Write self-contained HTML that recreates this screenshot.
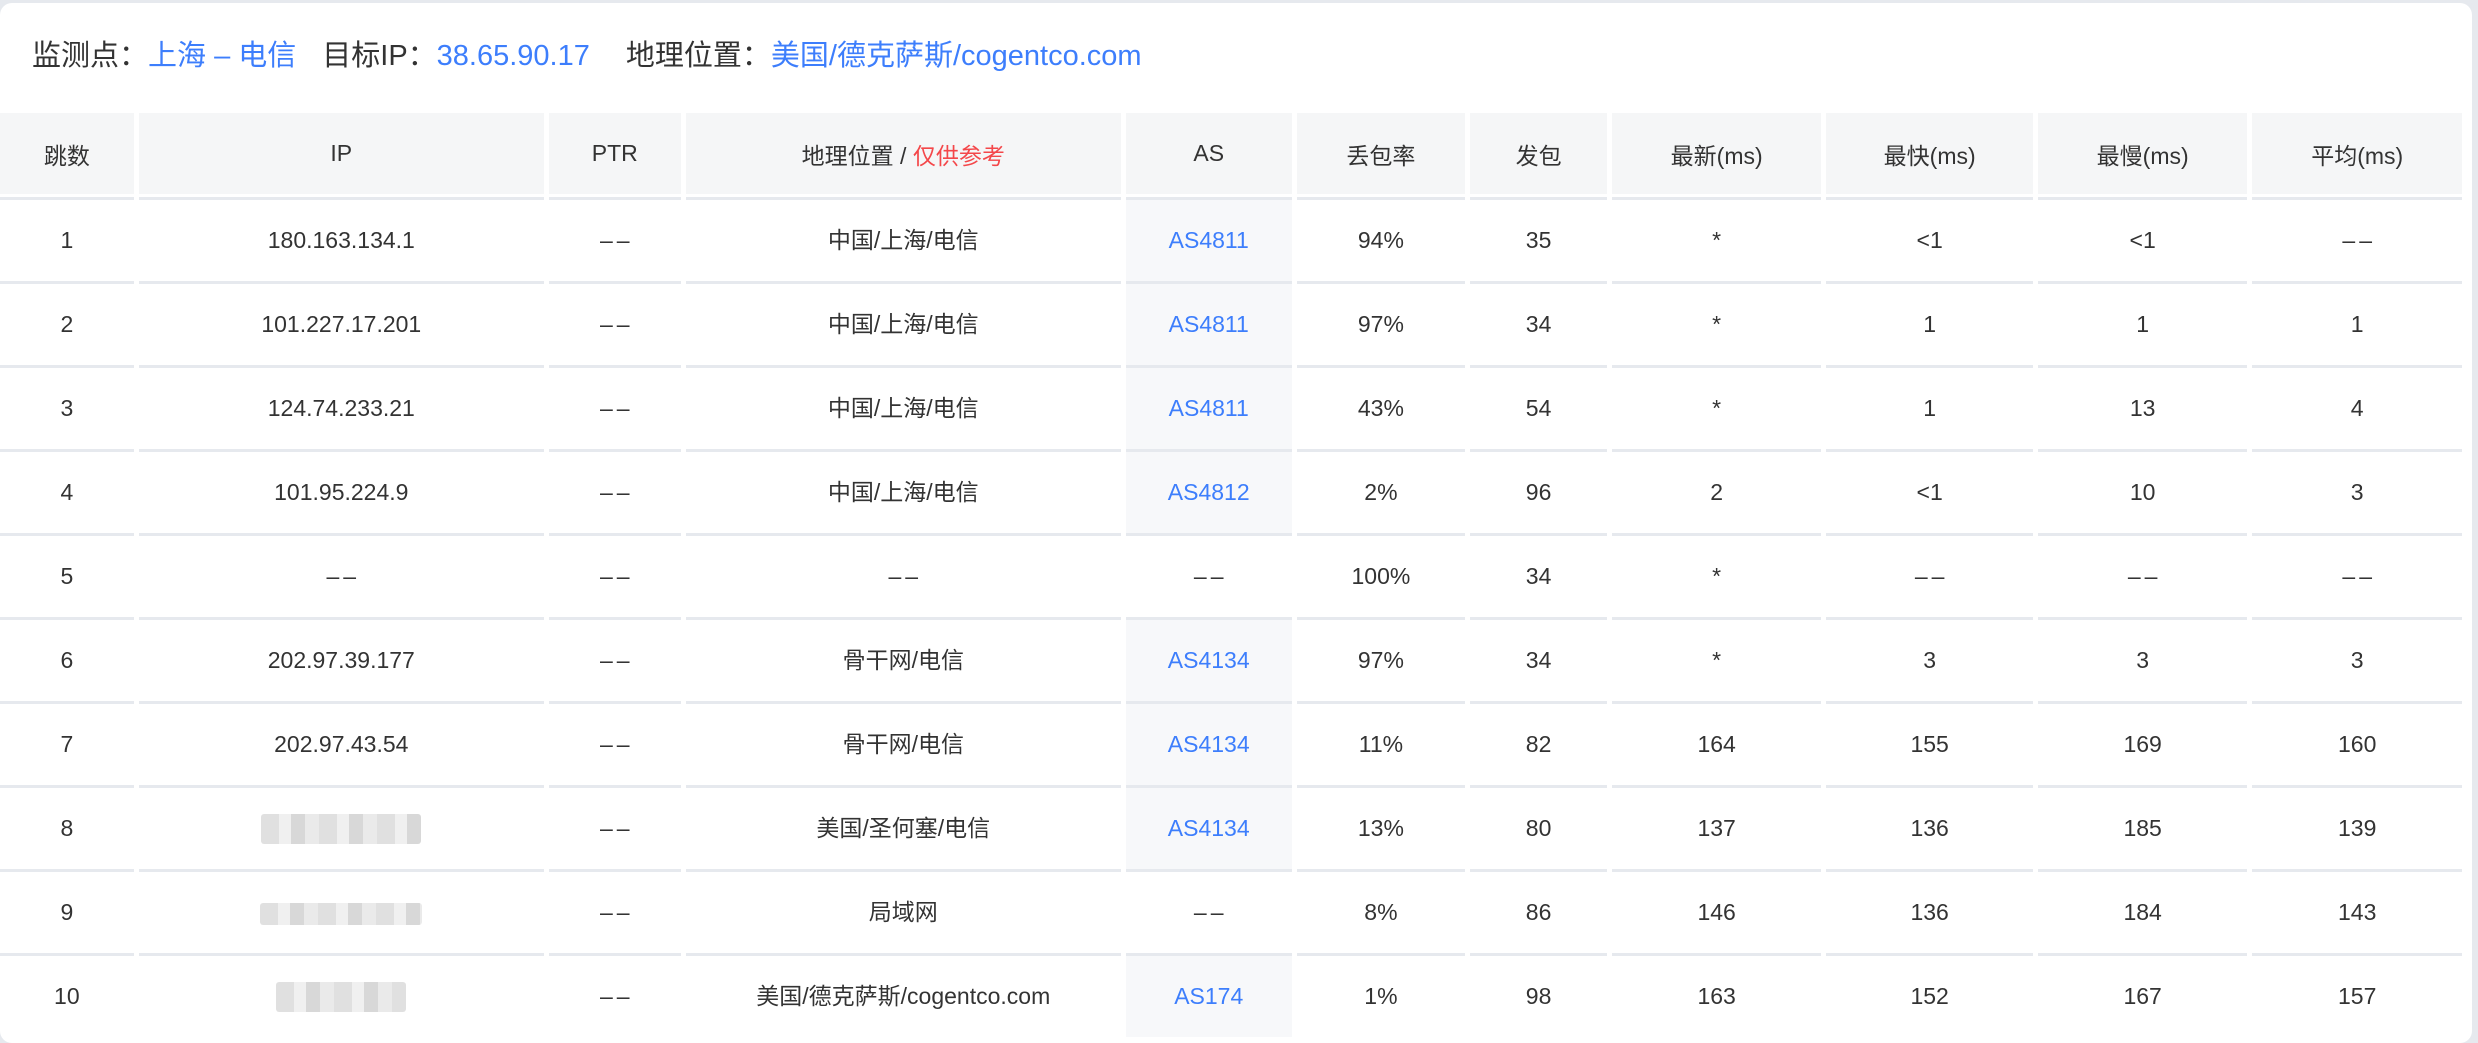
<!DOCTYPE html>
<html><head><meta charset="utf-8"><style>
body{margin:0;width:2478px;height:1038px;background:#e6e9ee;overflow:hidden;font-family:"Liberation Sans","Noto Sans CJK SC",sans-serif;color:#333;}
.card{position:absolute;left:0;top:3px;width:2472px;height:1040px;background:#fff;border-radius:12px;overflow:hidden;}
.top{position:absolute;left:32px;top:36px;font-size:29px;line-height:34px;white-space:nowrap;}
.b{color:#3d7efc}.r{color:#f4474a}
table{position:absolute;left:-5px;top:110px;border-collapse:separate;border-spacing:5px 0;table-layout:fixed;font-size:23px;}
th{height:81px;background:#f5f6f7;font-weight:normal;padding:0;text-align:center;}
td{height:81px;border-top:3px solid #e6e9ee;padding:0;text-align:center;}
td.as{background:#f7f8fa;color:#3d7efc}
.cn{position:relative;top:-3px}
.d{letter-spacing:4px;margin-right:-4px}
.blur{display:inline-block;height:22px;vertical-align:middle;background:repeating-linear-gradient(90deg,#ddd 0 18px,#eee 18px 30px,#d4d4d4 30px 44px,#e8e8e8 44px 58px);opacity:.9;border-radius:3px}
.sp td{height:3px;border:0;padding:0}
</style></head><body>
<div class="card">
<div class="top">监测点：<span class="b">上海 – 电信</span><span style="margin-left:26px">目标IP：</span><span class="b">38.65.90.17</span><span style="margin-left:36px">地理位置：</span><span class="b">美国/德克萨斯/cogentco.com</span></div>
<table>
<colgroup><col style="width:134px"><col style="width:406px"><col style="width:132px"><col style="width:436px"><col style="width:166px"><col style="width:169px"><col style="width:137px"><col style="width:210px"><col style="width:207px"><col style="width:210px"><col style="width:210px"></colgroup>
<tr><th>跳数</th><th>IP</th><th>PTR</th><th>地理位置 / <span class="r">仅供参考</span></th><th>AS</th><th>丢包率</th><th>发包</th><th>最新(ms)</th><th>最快(ms)</th><th>最慢(ms)</th><th>平均(ms)</th></tr>
<tr class="sp"><td colspan="11"></td></tr>
<tr><td>1</td><td>180.163.134.1</td><td><span class="d">––</span></td><td><span class="cn">中国/上海/电信</span></td><td class="as">AS4811</td><td>94%</td><td>35</td><td>*</td><td>&lt;1</td><td>&lt;1</td><td><span class="d">––</span></td></tr>
<tr><td>2</td><td>101.227.17.201</td><td><span class="d">––</span></td><td><span class="cn">中国/上海/电信</span></td><td class="as">AS4811</td><td>97%</td><td>34</td><td>*</td><td>1</td><td>1</td><td>1</td></tr>
<tr><td>3</td><td>124.74.233.21</td><td><span class="d">––</span></td><td><span class="cn">中国/上海/电信</span></td><td class="as">AS4811</td><td>43%</td><td>54</td><td>*</td><td>1</td><td>13</td><td>4</td></tr>
<tr><td>4</td><td>101.95.224.9</td><td><span class="d">––</span></td><td><span class="cn">中国/上海/电信</span></td><td class="as">AS4812</td><td>2%</td><td>96</td><td>2</td><td>&lt;1</td><td>10</td><td>3</td></tr>
<tr><td>5</td><td><span class="d">––</span></td><td><span class="d">––</span></td><td><span class="d">––</span></td><td><span class="d">––</span></td><td>100%</td><td>34</td><td>*</td><td><span class="d">––</span></td><td><span class="d">––</span></td><td><span class="d">––</span></td></tr>
<tr><td>6</td><td>202.97.39.177</td><td><span class="d">––</span></td><td><span class="cn">骨干网/电信</span></td><td class="as">AS4134</td><td>97%</td><td>34</td><td>*</td><td>3</td><td>3</td><td>3</td></tr>
<tr><td>7</td><td>202.97.43.54</td><td><span class="d">––</span></td><td><span class="cn">骨干网/电信</span></td><td class="as">AS4134</td><td>11%</td><td>82</td><td>164</td><td>155</td><td>169</td><td>160</td></tr>
<tr><td>8</td><td><span class="blur" style="width:160px;height:30px"></span></td><td><span class="d">––</span></td><td><span class="cn">美国/圣何塞/电信</span></td><td class="as">AS4134</td><td>13%</td><td>80</td><td>137</td><td>136</td><td>185</td><td>139</td></tr>
<tr><td>9</td><td><span class="blur" style="width:162px"></span></td><td><span class="d">––</span></td><td><span class="cn">局域网</span></td><td><span class="d">––</span></td><td>8%</td><td>86</td><td>146</td><td>136</td><td>184</td><td>143</td></tr>
<tr><td>10</td><td><span class="blur" style="width:130px;height:30px"></span></td><td><span class="d">––</span></td><td><span class="cn">美国/德克萨斯/cogentco.com</span></td><td class="as">AS174</td><td>1%</td><td>98</td><td>163</td><td>152</td><td>167</td><td>157</td></tr>
</table>
</div>
</body></html>
